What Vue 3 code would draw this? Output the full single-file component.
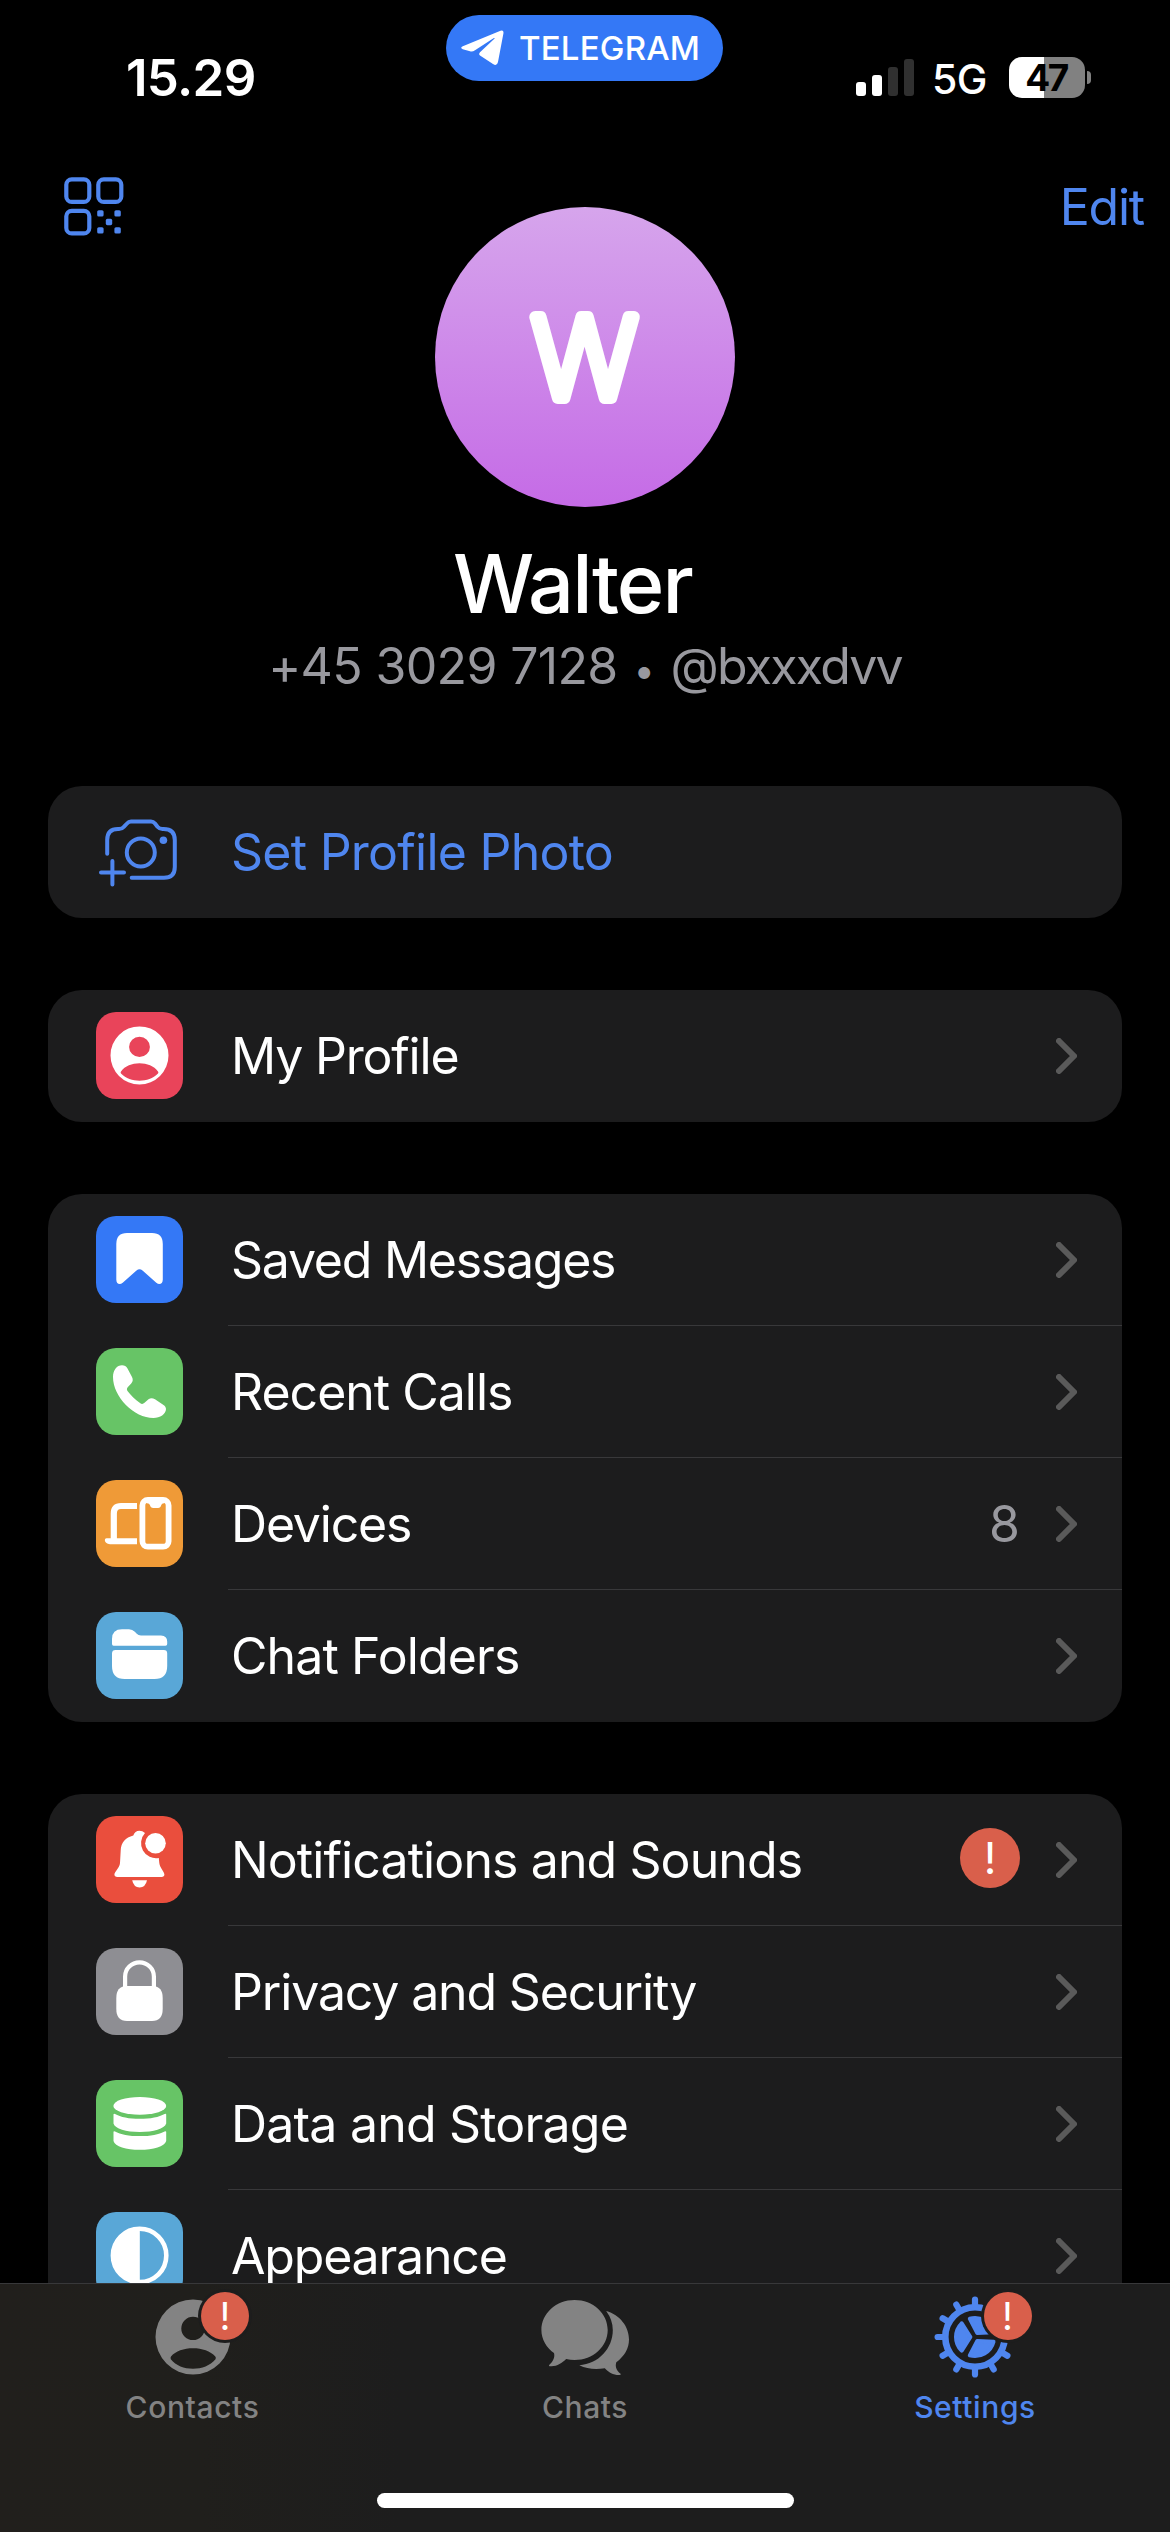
<template>
  <div class="screen">
    <div class="content">
      <header class="status">
        <div class="status__time">15.29</div>
        <div class="pill">
          <svg class="pill__icon" viewBox="0 0 44 36">
            <path d="M40.5 .8Q44 -.4 43.4 3.6L38 32Q37 36.5 33 34L20 25.6Q18.3 24.2 20 22.2L34.6 8.6Q35 7.5 33.5 8.2L15 20.2Q12.5 22 10 21.3L2.8 19.2Q-.4 17.8 2.8 16.2z" />
          </svg>
          <span class="pill__text">TELEGRAM</span>
        </div>
        <div class="status__right">
          <div class="signal">
            <i v-for="n in 4" :key="n" :class="['signal__bar', 'signal__bar--' + n]"></i>
          </div>
          <span class="status__net">5G</span>
          <div class="battery"><span class="battery__text">47</span></div>
          <i class="battery__tip"></i>
        </div>
      </header>

      <nav class="topbar">
        <svg class="qr" viewBox="0 0 60 60">
          <g fill="none" stroke="#4f86ef" stroke-width="4.2">
            <rect x="2.3" y="2.3" width="23" height="22.6" rx="5.5" />
            <rect x="34.3" y="2.3" width="23" height="22.6" rx="5.5" />
            <rect x="2.3" y="33.8" width="23" height="22.6" rx="5.5" />
          </g>
          <g fill="#4f86ef">
            <rect x="33.2" y="33.2" width="6.4" height="6.4" rx="1.6" />
            <rect x="50.4" y="33.2" width="6.4" height="6.4" rx="1.6" />
            <rect x="41.8" y="41.8" width="6.4" height="6.4" rx="1.6" />
            <rect x="33.2" y="50.2" width="6.4" height="6.4" rx="1.6" />
            <rect x="50.4" y="50.2" width="6.4" height="6.4" rx="1.6" />
          </g>
        </svg>
        <a class="edit">Edit</a>
      </nav>

      <section class="profile">
        <svg class="avatar" viewBox="0 0 300 300">
          <defs>
            <linearGradient id="avatarFill" x1="0" y1="0" x2="0" y2="1">
              <stop offset="0" stop-color="#d6a5ec" />
              <stop offset="1" stop-color="#c56be6" />
            </linearGradient>
          </defs>
          <circle cx="150" cy="150" r="150" fill="url(#avatarFill)" />
          <text class="avatar__letter" x="149.5" y="191" text-anchor="middle">W</text>
        </svg>
        <h1 class="profile__name">Walter</h1>
        <p class="profile__info">
          <span class="profile__phone">+45 3029 7128</span>
          <span class="profile__dot">•</span>
          <span class="profile__user">@bxxxdvv</span>
        </p>
      </section>

      <div class="groups">
        <div class="group" v-for="(group, g) in groups" :key="g">
          <div class="row" v-for="row in group" :key="row.label" @click="selected = row.label">
            <svg
              v-if="row.icon === 'camera'"
              class="row__icon"
              viewBox="0 0 87 87"
              fill="none"
              stroke="#4f86ef"
              stroke-width="4"
              stroke-linecap="round"
              stroke-linejoin="round"
            >
              <path d="M11.2 45.8V32Q11.2 21 22 21H23Q26 21 28 18.7L31 15.5Q32.7 13.5 35 13.5H55Q57.3 13.5 59 15.5L61.5 18.7Q63.5 21 66.5 21H67.5Q78.8 21 78.8 32V59Q78.8 69.8 68 69.8H35.7" />
              <circle cx="44.8" cy="44.5" r="14" />
              <circle cx="67.4" cy="32.2" r="3.8" fill="#4f86ef" stroke="none" />
              <path d="M5 64.5H28M16.4 53V76.5" />
            </svg>
            <svg v-else class="row__icon tile" :class="'tile--' + row.icon" viewBox="0 0 87 87" fill="#fff">
              <template v-if="row.icon === 'profile'">
                <path fill-rule="evenodd" d="M43.5 14.4a29 29 0 1 0 0 58a29 29 0 1 0 0-58zM43.5 24.7a10.4 10.2 0 1 1 0 20.4a10.4 10.2 0 1 1 0-20.4zM25 61.6Q24.2 60.6 25 59.5C29 54 36 51.3 43.5 51.3S58 54 62 59.5Q62.8 60.6 62 61.6C57 66.5 50.5 68.8 43.5 68.8S30 66.5 25 61.6z" />
              </template>
              <template v-if="row.icon === 'saved'">
                <path d="M31 17H56Q66.8 17 66.8 28V63.5C66.8 68 63.3 69.4 60.3 66.8L46.5 54.6Q43.5 52 40.5 54.6L26.7 66.8C23.7 69.4 20.3 68 20.3 63.5V28Q20.3 17 31 17z" />
              </template>
              <template v-if="row.icon === 'calls'">
                <path d="M26 17.3C21 17.3 17 22 17 29C17 49 38 70 57.5 70C64 70 70 66 70 61C70 59.5 69 58 67.5 57L59 51.3C56.5 49.8 54.5 49.8 52.5 51.3L48.5 54.8C47 56.2 45.5 56.2 44 55C39 51.5 34.5 47 31.5 43C30.7 41.8 30.7 40.5 31.7 39.3L35.2 35.5C37 33.5 37.2 31.5 36 29L31.5 20.5C30.3 18.3 28.5 17.3 26 17.3z" />
              </template>
              <template v-if="row.icon === 'devices'">
                <path d="M41 26H25Q17.8 26 17.8 33.5V60" fill="none" stroke="#fff" stroke-width="6.2" />
                <path d="M10.5 58.3H41V64.2H14Q8.8 63.5 8.8 60Q8.8 58.3 10.5 58.3z" />
                <rect x="46.4" y="19.9" width="26.2" height="46.8" rx="5.5" fill="none" stroke="#fff" stroke-width="5.8" />
                <path d="M51 22H68V23.2Q65.7 23.5 65.3 25Q64.6 28 62 28H57.2Q54.6 28 53.9 25Q53.5 23.5 51 23.2z" />
              </template>
              <template v-if="row.icon === 'folders'">
                <path d="M26 17.3H33Q36.5 17.3 38.8 19.8L40.5 21.5Q42.3 23.4 45 23.4H65Q71.2 23.6 71.2 29.5V32Q71.2 33.7 69.5 33.7H17.6Q16 33.7 16 32V27Q16 17.3 26 17.3z" />
                <path d="M19.5 38H67.8Q71.2 38 71.2 41.4V54Q71.2 67 58.5 67H28.7Q16 67 16 54V41.4Q16 38 19.5 38z" />
              </template>
              <template v-if="row.icon === 'notifications'">
                <path d="M43.4 14.7C40.5 14.7 38.3 16.4 37.3 19.5C29.5 21.5 25 26.5 24.7 34.5L24 47C23.7 52 18.4 55.5 18.4 58.6Q18.4 61 21.4 61H65.5Q68.4 61 68.4 58.6C68.4 55.5 63.8 52 63.3 47L62.8 41.9A15 15 0 0 1 49 17Q46.5 14.7 43.4 14.7z" />
                <circle cx="59.5" cy="27.3" r="10.3" />
                <path d="M36.2 64.2H51Q49.5 71.4 43.6 71.4T36.2 64.2z" />
              </template>
              <template v-if="row.icon === 'privacy'">
                <path d="M29.1 40V28.5a14.4 14.2 0 0 1 28.8 0V40" fill="none" stroke="#fff" stroke-width="4.2" />
                <path d="M30 38H57Q66.7 38.5 66.7 50V61Q66.7 73 56 73H31Q20.3 73 20.3 61V50Q20.3 38.5 30 38z" />
              </template>
              <template v-if="row.icon === 'data'">
                <ellipse cx="43.8" cy="25.9" rx="26.4" ry="8.9" />
                <path d="M17.5 34.5Q17.5 33.2 19 33.9C24.5 37 33 38.8 43.8 38.8S63 37 68.6 33.9Q70.2 33.2 70.2 34.5V43.5C68.5 48.8 57.5 52 43.8 52S19 48.8 17.5 43.5z" />
                <path d="M17.5 52Q17.5 50.7 19 51.4C24.5 54.5 33 56.1 43.8 56.1S63 54.5 68.6 51.4Q70.2 50.7 70.2 52V61C68.5 66.6 57.5 69.8 43.8 69.8S19 66.6 17.5 61z" />
              </template>
              <template v-if="row.icon === 'appearance'">
                <circle cx="43.6" cy="43.4" r="26.7" fill="none" stroke="#fff" stroke-width="4.6" />
                <path d="M43.8 15A28.4 28.4 0 0 0 43.8 71.8z" />
              </template>
            </svg>
            <div class="row__body">
              <span
                class="row__label"
                :class="{ 'row__label--link': row.link }"
                :style="{ letterSpacing: row.tracking + 'px' }"
              >{{ row.label }}</span>
              <span v-if="row.value" class="row__value">{{ row.value }}</span>
              <span v-if="row.alert" class="alert">!</span>
              <svg v-if="!row.link" class="row__chevron" viewBox="0 0 21 36">
                <path d="M3 3L18 18L3 33" fill="none" stroke="#5a5a5a" stroke-width="6" stroke-linecap="round" stroke-linejoin="round" />
              </svg>
            </div>
          </div>
        </div>
      </div>
    </div>

    <footer class="tabbar">
      <div class="tabs">
        <div class="tab">
          <div class="tab__icon">
            <svg width="76" height="76" viewBox="-38 -38 76 76">
              <path fill="#838383" fill-rule="evenodd" d="M0 -37.5a37.5 37.5 0 1 0 0 75a37.5 37.5 0 1 0 0 -75zM0 -20.3a11.7 11.7 0 1 1 0 23.4a11.7 11.7 0 1 1 0 -23.4zM-22.2 22.3Q-22.8 20.8 -22 19.6C-17.5 13.8 -9 11.2 0 11.2S17.5 13.8 22.3 19.6Q23.3 20.8 22.5 22.3C17 28.8 9 31.8 0 31.8S-17 28.8 -22.2 22.3z" />
            </svg>
            <span class="tab__badge">!</span>
          </div>
          <span class="tab__label">Contacts</span>
        </div>
        <div class="tab">
          <div class="tab__icon">
            <svg width="88" height="78" viewBox="0 0 88 78" fill="#838383">
              <path d="M33.6 2C52 2 66.7 15.4 66.7 32S52 62 33.6 62Q29.2 62 25.2 61.1C20.5 65.5 15.5 69 8.5 68.2Q7.2 67.8 8.4 66.8C12 63.5 14.2 59.5 13 55C5.5 49.8 .4 41.5 .4 32C.4 15.4 15.2 2 33.6 2z" />
              <path d="M65.2 13C79 17 88 28.5 88 41.5C88 50.5 83.5 58 75.3 64.3C73.8 69 75.8 72.8 79.3 75.6Q80.6 77 78.5 77C72.5 77.2 67.8 74.5 63.8 70.2C54.5 71.6 46 71 38.3 67.2C57.5 66 71.8 50.5 71.8 32Q71.8 22 65.2 13z" />
            </svg>
          </div>
          <span class="tab__label">Chats</span>
        </div>
        <div class="tab tab--active">
          <div class="tab__icon">
            <svg width="84" height="84" viewBox="-42 -42 84 84" fill="none" stroke="#4f86ef">
              <circle r="29.7" stroke-width="6.6" />
              <path
                v-for="n in 12"
                :key="'tooth' + n"
                d="M0 -32V-37.4"
                stroke-width="6.2"
                stroke-linecap="round"
                :transform="`rotate(${n * 30})`"
              />
              <path
                v-for="n in 3"
                :key="'wedge' + n"
                d="M-4.6 0L-13.3 -13.7A19.3 19.3 0 0 0 -13.3 13.7z"
                fill="#4f86ef"
                stroke-width="4"
                stroke-linejoin="round"
                :transform="`rotate(${n * 120})`"
              />
            </svg>
            <span class="tab__badge">!</span>
          </div>
          <span class="tab__label">Settings</span>
        </div>
      </div>
      <div class="home"></div>
    </footer>
  </div>
</template>

<script setup>
import { ref } from "vue";

const selected = ref("");

const groups = [
  [{ icon: "camera", label: "Set Profile Photo", link: true, tracking: -0.75 }],
  [{ icon: "profile", label: "My Profile", tracking: -1.2 }],
  [
    { icon: "saved", label: "Saved Messages", tracking: -1.25 },
    { icon: "calls", label: "Recent Calls", tracking: -1 },
    { icon: "devices", label: "Devices", value: "8", tracking: -1.2 },
    { icon: "folders", label: "Chat Folders", tracking: -0.9 },
  ],
  [
    { icon: "notifications", label: "Notifications and Sounds", alert: true, tracking: -0.9 },
    { icon: "privacy", label: "Privacy and Security", tracking: -1.15 },
    { icon: "data", label: "Data and Storage", tracking: -0.8 },
    { icon: "appearance", label: "Appearance", tracking: -1.2 },
  ],
];
</script>

<style>
body {
  margin: 0;
  background: #000;
}
</style>

<style scoped>
* {
  box-sizing: border-box;
}

.screen {
  width: 1170px;
  height: 2532px;
  display: flex;
  flex-direction: column;
  background: #000;
  color: #fff;
  font-family: Inter, "Liberation Sans", sans-serif;
  overflow: hidden;
}

.content {
  flex: none;
  height: 2283px;
  overflow: hidden;
}

svg {
  display: block;
  flex: none;
}

/* status bar */
.status {
  display: grid;
  grid-template-columns: 446px 277px 1fr;
  height: 156px;
  align-items: start;
}

.status__time {
  padding: 47px 0 0 126px;
  font-size: 51px;
  line-height: 62px;
  font-weight: 600;
  letter-spacing: -0.7px;
}

.pill {
  display: flex;
  align-items: center;
  margin-top: 15px;
  height: 66px;
  padding-left: 14px;
  border-radius: 33px;
  background: #3478f6;
}

.pill__icon {
  width: 44px;
  height: 36px;
  fill: #fff;
}

.pill__text {
  margin-left: 15px;
  font-size: 33px;
  font-weight: 500;
  letter-spacing: 0.2px;
}

.status__right {
  display: flex;
  align-items: center;
  height: 41px;
  margin-top: 57px;
  padding-left: 133px;
}

.signal {
  display: flex;
  align-items: flex-end;
  gap: 6px;
  height: 37px;
}

.signal__bar {
  width: 10px;
  border-radius: 3px;
  background: #fff;
}

.signal__bar--1 {
  height: 14px;
}

.signal__bar--2 {
  height: 21px;
}

.signal__bar--3 {
  height: 29px;
  background: #303030;
}

.signal__bar--4 {
  height: 37px;
  background: #303030;
}

.status__net {
  width: 75px;
  margin-left: 18px;
  padding-top: 2px;
  font-size: 41px;
  font-weight: 500;
  letter-spacing: -0.5px;
}

.battery {
  width: 76px;
  height: 41px;
  margin-left: 2px;
  border-radius: 13px;
  background: linear-gradient(90deg, #fff 35px, #818181 35px);
  text-align: center;
}

.battery__text {
  margin-right: 2px;
  color: #000;
  font-size: 37px;
  line-height: 41px;
  font-weight: 700;
  letter-spacing: -2.5px;
}

.battery__tip {
  width: 4px;
  height: 13px;
  margin-left: 2px;
  border-radius: 0 5px 5px 0;
  background: #818181;
}

/* navigation */
.topbar {
  display: flex;
  justify-content: space-between;
  height: 51px;
  padding: 21px 26px 0 64px;
}

.qr {
  width: 60px;
  height: 60px;
}

.edit {
  color: #4f86ef;
  font-size: 50px;
  line-height: 60px;
  letter-spacing: -1.2px;
}

/* profile */
.profile {
  display: flex;
  flex-direction: column;
  align-items: center;
  height: 579px;
}

.avatar {
  width: 300px;
  height: 300px;
}

.avatar__letter {
  font-size: 111px;
  font-weight: 200;
  fill: #fff;
  stroke: #fff;
  stroke-width: 12px;
  stroke-linejoin: round;
}

.profile__name {
  margin: 27px 0 0 -25px;
  font-size: 81px;
  line-height: 100px;
  font-weight: 500;
  letter-spacing: -1.9px;
}

.profile__info {
  display: flex;
  align-items: baseline;
  margin: 2px 0 0;
  color: #98989e;
  font-size: 50px;
  line-height: 60px;
  white-space: nowrap;
}

.profile__phone {
  letter-spacing: -0.65px;
}

.profile__dot {
  width: 53px;
  font-size: 38px;
  text-align: center;
}

.profile__user {
  letter-spacing: -1.8px;
}

/* settings groups */
.groups {
  display: flex;
  flex-direction: column;
  gap: 72px;
  padding: 0 48px;
}

.group {
  border-radius: 34px;
  background: #1c1c1d;
}

.row {
  display: flex;
  height: 132px;
  padding-left: 48px;
}

.row__icon {
  width: 87px;
  height: 87px;
  margin: 22px 45px 0 0;
}

.tile {
  border-radius: 20px;
}

.tile--profile {
  background: #e9445a;
}

.tile--saved {
  background: #3478f6;
}

.tile--calls,
.tile--data {
  background: #67c466;
}

.tile--devices {
  background: #ef9a37;
}

.tile--folders,
.tile--appearance {
  background: #59a7d7;
}

.tile--notifications {
  background: #ea4e3d;
}

.tile--privacy {
  background: #8e8e93;
}

.row__body {
  flex: 1;
  display: flex;
  align-items: center;
  padding: 0 45px 0 3px;
  border-bottom: 1px solid #38383a;
}

.row:last-child .row__body {
  border-bottom-color: transparent;
}

.row__label {
  flex: 1;
  font-size: 50px;
}

.row__label--link {
  color: #4f86ef;
}

.row__value {
  color: #98989e;
  font-size: 50px;
}

.row__chevron {
  width: 21px;
  height: 36px;
  margin-left: 36px;
}

.alert {
  width: 60px;
  height: 60px;
  margin-top: -4px;
  border-radius: 50%;
  background: #d95f4b;
  font-size: 44px;
  line-height: 60px;
  text-align: center;
}

/* tab bar */
.tabbar {
  flex: 1;
  display: flex;
  flex-direction: column;
  align-items: center;
  border-top: 1px solid #38383a;
  background: linear-gradient(90deg, #211f1c 0, #201f1c 200px, #1d1d1d 400px);
}

.tabs {
  display: grid;
  grid-template-columns: 385px 400px 380px;
  width: 1170px;
  height: 209px;
}

.tab {
  display: flex;
  flex-direction: column;
  align-items: center;
  color: #838383;
}

.tab--active {
  color: #4f86ef;
}

.tab__icon {
  position: relative;
  display: flex;
  align-items: center;
  height: 106px;
}

.tab__badge {
  position: absolute;
  top: 8px;
  left: calc(50% + 8.5px);
  width: 48px;
  height: 48px;
  border-radius: 50%;
  background: #d95f4b;
  box-shadow: 0 0 0 3px #1d1d1d;
  color: #fff;
  font-size: 38px;
  line-height: 48px;
  text-align: center;
}

.tab__label {
  margin-top: -1px;
  font-size: 30px;
  line-height: 36px;
  font-weight: 500;
  letter-spacing: 0.6px;
}

.home {
  width: 417px;
  height: 15px;
  border-radius: 8px;
  background: #fff;
}
</style>
